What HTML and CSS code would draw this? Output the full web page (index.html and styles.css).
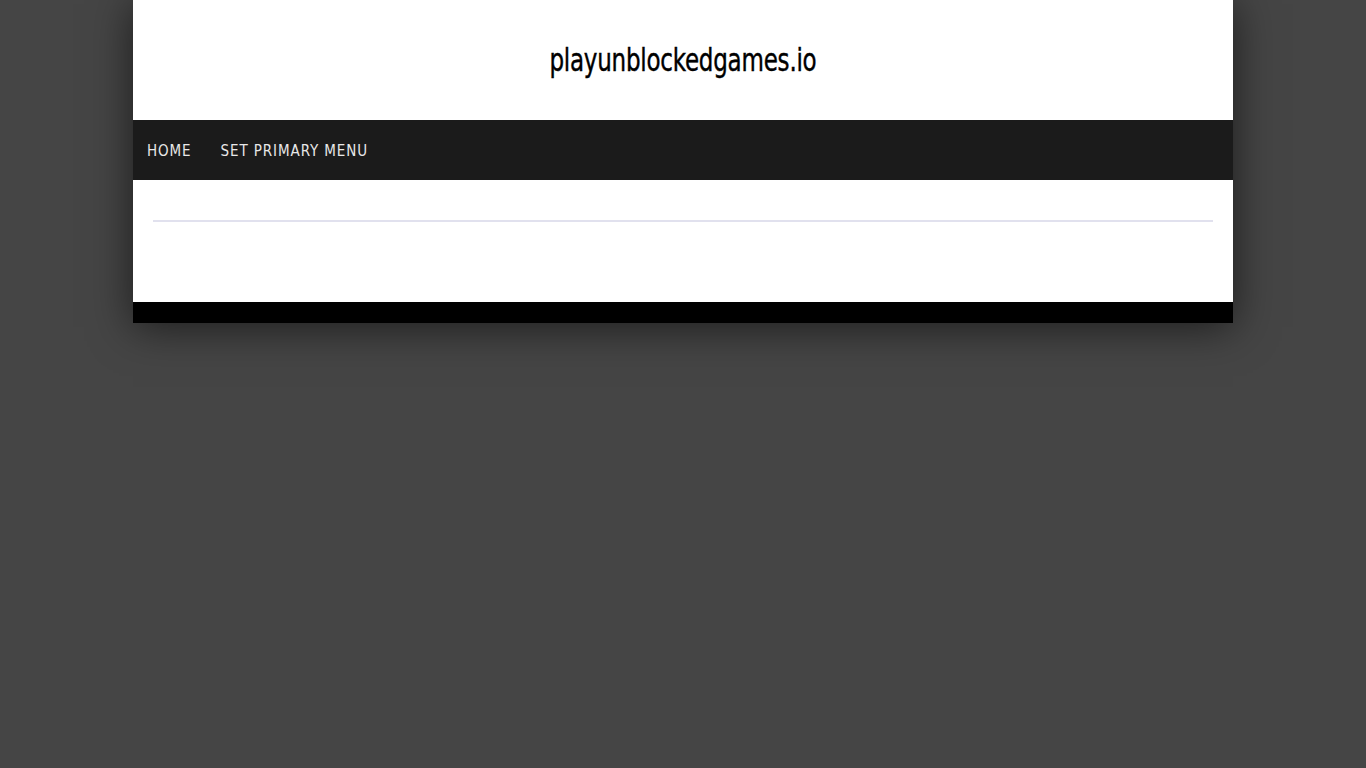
FILE: index.html
```html
<!DOCTYPE html>
<html>
<head>
<meta charset="utf-8">
<link rel="stylesheet" href="styles.css">
</head>
<body>
<div class="page">
  <header class="site-header">
    <h1 class="site-title">playunblockedgames.io</h1>
  </header>
  <nav class="main-nav">
    <a class="nav-link" href="#">Home</a>
    <a class="nav-link" href="#">Set Primary Menu</a>
  </nav>
  <main class="content">
    <hr class="divider">
  </main>
  <footer class="site-footer"></footer>
</div>
</body>
</html>
```
FILE: styles.css
```css
html, body {
  margin: 0;
  padding: 0;
  background: #454545;
}
body {
  min-height: 100vh;
  font-family: "DejaVu Sans Condensed", "Liberation Sans", sans-serif;
}
.page {
  width: 1100px;
  margin: 0 auto;
  background: #fff;
  box-shadow: 0 4px 40px rgba(0, 0, 0, 0.6);
}
.site-header {
  height: 120px;
  display: flex;
  align-items: center;
  justify-content: center;
}
.site-title {
  margin: 0;
  font-family: "DejaVu Sans Condensed", sans-serif;
  font-weight: normal;
  font-size: 32px;
  color: #000;
  letter-spacing: -0.3px;
  transform: scaleX(0.8);
  -webkit-text-stroke: 0.4px #000;
}
.main-nav {
  height: 60px;
  background: #1b1b1b;
  display: flex;
  align-items: center;
  padding: 2px 0 0 14px;
  box-sizing: border-box;
  gap: 29px;
}
.nav-link {
  color: #e8e8e8;
  text-decoration: none;
  text-transform: uppercase;
  font-size: 15px;
  letter-spacing: 0.9px;
}
.content {
  height: 122px;
  padding: 40px 20px 0;
  box-sizing: border-box;
}
.divider {
  margin: 0;
  border: 0;
  height: 2px;
  background: #e1e1ee;
}
.site-footer {
  height: 21px;
  background: #000;
}
```
